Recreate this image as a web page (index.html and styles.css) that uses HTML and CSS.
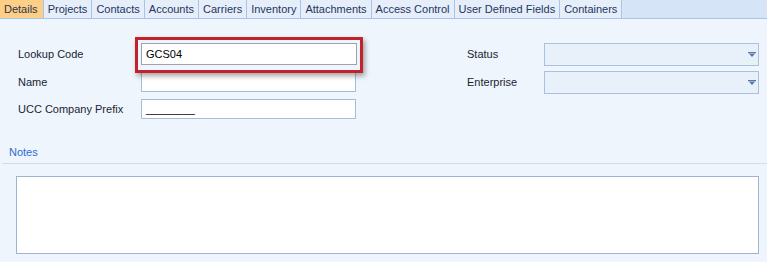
FILE: index.html
```html
<!DOCTYPE html>
<html lang="en">
<head>
    <meta charset="UTF-8">
    <title>Details</title>
    <link rel="stylesheet" href="styles.css">
</head>
<body>
    <div class="tabs">
        <div class="tab active">Details</div>
        <div class="tab">Projects</div>
        <div class="tab">Contacts</div>
        <div class="tab">Accounts</div>
        <div class="tab">Carriers</div>
        <div class="tab">Inventory</div>
        <div class="tab">Attachments</div>
        <div class="tab">Access Control</div>
        <div class="tab">User Defined Fields</div>
        <div class="tab">Containers</div>
    </div>

    <div class="form">
        <div class="column">
            <div class="row">
                <label class="label">Lookup Code</label>
                <div class="highlight">
                    <div class="input lookup">GCS04</div>
                </div>
            </div>
            <div class="row">
                <label class="label">Name</label>
                <div class="input"></div>
            </div>
            <div class="row">
                <label class="label">UCC Company Prefix</label>
                <div class="input">________</div>
            </div>
        </div>
        <div class="column right">
            <div class="row">
                <label class="label">Status</label>
                <div class="combo">
                    <svg width="8" height="5" viewBox="0 0 8 5"><path d="M0 0h8v1.2H0zM1 1.8h6L4 5z" fill="#5676ad"/></svg>
                </div>
            </div>
            <div class="row">
                <label class="label">Enterprise</label>
                <div class="combo">
                    <svg width="8" height="5" viewBox="0 0 8 5"><path d="M0 0h8v1.2H0zM1 1.8h6L4 5z" fill="#5676ad"/></svg>
                </div>
            </div>
        </div>
    </div>

    <div class="notes">
        <div class="notes-title">Notes</div>
        <div class="notes-box"></div>
    </div>
</body>
</html>
```

FILE: styles.css
```css
body {
    margin: 0;
    padding: 0;
    background-color: #eef5fd;
    font-family: "Liberation Sans", Arial, sans-serif;
    font-size: 11px;
    color: #1b2433;
    width: 767px;
    height: 262px;
    overflow: hidden;
}
.tabs {
    display: flex;
    height: 18px;
    background-color: #d6e4f7;
    border-bottom: 1px solid #a9c4ea;
}
.tab {
    padding: 0 4px;
    line-height: 18px;
    background-color: #e6eefa;
    border-right: 1px solid #a9c4ea;
    color: #1d3561;
}
.tab.active {
    background-color: #fdcf86;
    color: #2a3550;
    padding-right: 5px;
}
.form {
    display: flex;
    padding: 24px 0 0 18px;
    height: 101px;
}
.column {
    display: flex;
    flex-direction: column;
    gap: 7px;
    width: 338px;
}
.column.right {
    margin-left: 111px;
}
.row {
    display: flex;
    align-items: center;
    height: 20px;
}
.row:first-child {
    height: 22px;
}
.label {
    width: 123px;
    flex-shrink: 0;
}
.column.right .label {
    width: 77px;
}
.input {
    box-sizing: border-box;
    width: 216px;
    height: 20px;
    padding: 0 4px;
    line-height: 18px;
    background-color: #fff;
    border: 1px solid #a8bbd8;
    color: #000;
}
.input.lookup {
    height: 22px;
    line-height: 20px;
    border-color: #9ca3ad;
}
.highlight {
    position: relative;
}
.highlight::after {
    content: "";
    position: absolute;
    left: -6px;
    right: -6px;
    top: -6px;
    bottom: -8px;
    border: 3px solid #c4222b;
    box-shadow: 2px 3px 5px rgba(0, 0, 0, 0.35);
    pointer-events: none;
}
.combo {
    box-sizing: border-box;
    width: 215px;
    height: 23px;
    background-color: #e8f0fa;
    border: 1px solid #a9c0e2;
    display: flex;
    align-items: center;
    justify-content: flex-end;
    padding-right: 2px;
}
.notes-title {
    color: #2d6fd0;
    margin: 2px 0 0 2px;
    padding: 0 0 5px 7px;
    border-bottom: 1px solid #d4dce8;
    line-height: 12px;
}
.notes-box {
    box-sizing: border-box;
    margin: 12px 0 0 16px;
    width: 743px;
    height: 78px;
    background-color: #fff;
    border: 1px solid #9fb3d4;
}
```
